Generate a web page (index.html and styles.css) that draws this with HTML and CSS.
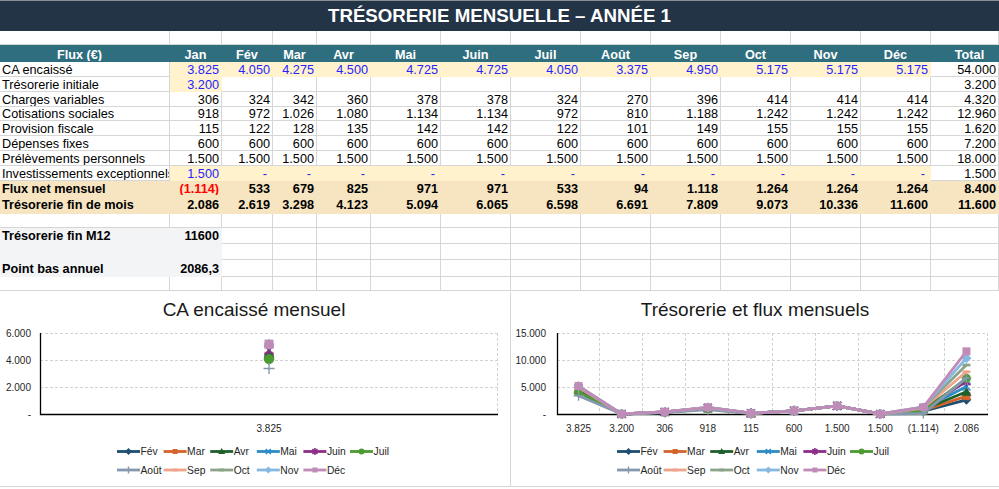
FILE: index.html
```html
<!DOCTYPE html>
<html lang="fr">
<head>
<meta charset="utf-8">
<title>Trésorerie mensuelle – Année 1</title>
<link rel="stylesheet" href="styles.css">
</head>
<body>
<div class="sheet">
  <header class="title-bar"><h1>TRÉSORERIE MENSUELLE – ANNÉE 1</h1></header>
  <table class="grid">
    <colgroup>
      <col class="w-label"><col class="w-jan"><col class="w-fev"><col class="w-mar"><col class="w-avr">
      <col class="w-m"><col class="w-m"><col class="w-m"><col class="w-m"><col class="w-m"><col class="w-m"><col class="w-m"><col class="w-m">
      <col class="w-total">
    </colgroup>
    <tbody>
      <tr class="h14"><td></td><td></td><td></td><td></td><td></td><td></td><td></td><td></td><td></td><td></td><td></td><td></td><td></td><td></td></tr>
      <tr class="head"><th class="lbl-h">Flux (€)</th><th>Jan</th><th>Fév</th><th>Mar</th><th>Avr</th><th>Mai</th><th>Juin</th><th>Juil</th><th>Août</th><th>Sep</th><th>Oct</th><th>Nov</th><th>Déc</th><th class="tot-h">Total</th></tr>
      <tr class="h15"><td class="lbl">CA encaissé</td><td class="y in">3.825</td><td class="y in">4.050</td><td class="y in">4.275</td><td class="y in">4.500</td><td class="y in">4.725</td><td class="y in">4.725</td><td class="y in">4.050</td><td class="y in">3.375</td><td class="y in">4.950</td><td class="y in">5.175</td><td class="y in">5.175</td><td class="y in">5.175</td><td>54.000</td></tr>
      <tr class="h15"><td class="lbl">Trésorerie initiale</td><td class="y in">3.200</td><td></td><td></td><td></td><td></td><td></td><td></td><td></td><td></td><td></td><td></td><td></td><td>3.200</td></tr>
      <tr class="h15"><td class="lbl">Charges variables</td><td>306</td><td>324</td><td>342</td><td>360</td><td>378</td><td>378</td><td>324</td><td>270</td><td>396</td><td>414</td><td>414</td><td>414</td><td>4.320</td></tr>
      <tr class="h14"><td class="lbl">Cotisations sociales</td><td>918</td><td>972</td><td>1.026</td><td>1.080</td><td>1.134</td><td>1.134</td><td>972</td><td>810</td><td>1.188</td><td>1.242</td><td>1.242</td><td>1.242</td><td>12.960</td></tr>
      <tr class="h15"><td class="lbl">Provision fiscale</td><td>115</td><td>122</td><td>128</td><td>135</td><td>142</td><td>142</td><td>122</td><td>101</td><td>149</td><td>155</td><td>155</td><td>155</td><td>1.620</td></tr>
      <tr class="h15"><td class="lbl">Dépenses fixes</td><td>600</td><td>600</td><td>600</td><td>600</td><td>600</td><td>600</td><td>600</td><td>600</td><td>600</td><td>600</td><td>600</td><td>600</td><td>7.200</td></tr>
      <tr class="h15"><td class="lbl">Prélèvements personnels</td><td>1.500</td><td>1.500</td><td>1.500</td><td>1.500</td><td>1.500</td><td>1.500</td><td>1.500</td><td>1.500</td><td>1.500</td><td>1.500</td><td>1.500</td><td>1.500</td><td>18.000</td></tr>
      <tr class="h15"><td class="lbl">Investissements exceptionnels</td><td class="y in">1.500</td><td class="y in dash">-</td><td class="y in dash">-</td><td class="y in dash">-</td><td class="y in dash">-</td><td class="y in dash">-</td><td class="y in dash">-</td><td class="y in dash">-</td><td class="y in dash">-</td><td class="y in dash">-</td><td class="y in dash">-</td><td class="y in dash">-</td><td>1.500</td></tr>
      <tr class="h15 tan"><td class="lbl">Flux net mensuel</td><td class="neg">(1.114)</td><td>533</td><td>679</td><td>825</td><td>971</td><td>971</td><td>533</td><td>94</td><td>1.118</td><td>1.264</td><td>1.264</td><td>1.264</td><td>8.400</td></tr>
      <tr class="h18 tan"><td class="lbl">Trésorerie fin de mois</td><td>2.086</td><td>2.619</td><td>3.298</td><td>4.123</td><td>5.094</td><td>6.065</td><td>6.598</td><td>6.691</td><td>7.809</td><td>9.073</td><td>10.336</td><td>11.600</td><td>11.600</td></tr>
      <tr class="h14"><td></td><td></td><td></td><td></td><td></td><td></td><td></td><td></td><td></td><td></td><td></td><td></td><td></td><td></td></tr>
      <tr class="h16"><td class="lbl g b">Trésorerie fin M12</td><td class="g b">11600</td><td></td><td></td><td></td><td></td><td></td><td></td><td></td><td></td><td></td><td></td><td></td><td></td></tr>
      <tr class="h16"><td class="g"></td><td class="g"></td><td></td><td></td><td></td><td></td><td></td><td></td><td></td><td></td><td></td><td></td><td></td><td></td></tr>
      <tr class="h17"><td class="lbl g b">Point bas annuel</td><td class="g b">2086,3</td><td></td><td></td><td></td><td></td><td></td><td></td><td></td><td></td><td></td><td></td><td></td><td></td></tr>
      <tr class="h14"><td></td><td></td><td></td><td></td><td></td><td></td><td></td><td></td><td></td><td></td><td></td><td></td><td></td><td></td></tr>
    </tbody>
  </table>
  <section class="charts">
    <figure class="chart chart-ca"><svg id="chart-ca" class="chart-svg" xmlns="http://www.w3.org/2000/svg"></svg></figure>
    <div class="chart-gap"></div>
    <figure class="chart chart-flux"><svg id="chart-flux" class="chart-svg" xmlns="http://www.w3.org/2000/svg"></svg></figure>
  </section>
</div>
<script src="script.js"></script>
</body>
</html>
```

FILE: styles.css
```css
html, body {
  margin: 0;
  padding: 0;
  background: #ffffff;
  overflow: hidden;
}

.sheet {
  width: 999px;
  font-family: "Liberation Sans", Arial, sans-serif;
}

.title-bar {
  box-sizing: border-box;
  height: 31px;
  background: #243447;
  border-top: 1px solid #8a8f96;
  display: flex;
  align-items: center;
  justify-content: center;
}

.title-bar h1 {
  margin: 0;
  color: #ffffff;
  font-size: 18.7px;
  font-weight: bold;
  line-height: 30px;
}

.grid {
  width: 999px;
  table-layout: fixed;
  border-collapse: separate;
  border-spacing: 0;
  font-size: 12.7px;
  color: #000000;
}

.w-label { width: 170px; }
.w-jan { width: 52px; }
.w-fev { width: 51px; }
.w-mar { width: 44px; }
.w-avr { width: 54px; }
.w-m { width: 70px; }
.w-total { width: 68px; }

.grid td,
.grid th {
  box-sizing: border-box;
  padding: 1px 2px 0;
  border-right: 1px solid #d6d6d6;
  border-bottom: 1px solid #d6d6d6;
  white-space: nowrap;
  overflow: hidden;
  text-align: right;
  line-height: 12px;
  vertical-align: middle;
}

.h14 { height: 14px; }
.h15 { height: 15px; }
.h16 { height: 16px; }
.h17 { height: 17px; }
.h18 { height: 18px; }

.head { height: 17px; }
.grid .head th {
  background: #2f6e7e;
  border-color: #2f6e7e;
  color: #ffffff;
  font-weight: bold;
  text-align: center;
  padding-top: 3px;
}
.grid .head .lbl-h { padding-right: 12px; }
.grid .head .tot-h { padding-left: 12px; }

.grid td.lbl { text-align: left; }

.grid td.y {
  background: #fff2cc;
  border-color: #fff2cc;
}

.in { color: #2424ff; }
.grid td.dash { padding-right: 5px; }

.tan td {
  background: #f6e5c0;
  border-color: #f6e5c0;
  font-weight: bold;
}

.neg { color: #ff0000; }

.grid td.g {
  background: #f3f4f6;
  border-color: #f3f4f6;
}
.b { font-weight: bold; }

.charts {
  display: flex;
  margin-top: 1px;
  height: 194px;
  border-bottom: 1px solid #d6d6d6;
}

.chart {
  margin: 0;
  background: #ffffff;
}
.chart-ca { width: 508px; }
.chart-flux { width: 487px; }

.chart-gap {
  width: 4px;
  background: linear-gradient(to right, transparent 2px, #d6d6d6 2px, #d6d6d6 3px, transparent 3px);
}

.chart-svg {
  display: block;
}

.c-title {
  font-family: "Liberation Sans", Arial, sans-serif;
  font-size: 19px;
  fill: #1a1a1a;
}

.c-axis {
  font-family: "Liberation Sans", Arial, sans-serif;
  font-size: 10px;
  fill: #262626;
}

.c-legend {
  font-family: "Liberation Sans", Arial, sans-serif;
  font-size: 10.3px;
  fill: #262626;
}
```

FILE: script.js
```js
(function () {
  var NS = 'http://www.w3.org/2000/svg';
  var MONTHS = ['Fév', 'Mar', 'Avr', 'Mai', 'Juin', 'Juil', 'Août', 'Sep', 'Oct', 'Nov', 'Déc'];
  var COLORS = ['#1d4f72', '#d2642c', '#1f5f2b', '#2a8bc6', '#8c2d88', '#4b9a32', '#8599ae', '#eea38c', '#8ba489', '#86b9e2', '#c18bb8'];
  var MARKERS = ['diamond', 'square', 'triangle', 'x', 'star', 'circle', 'plus', 'dash', 'dash', 'diamond', 'square'];

  var CA = [[4050], [4275], [4500], [4725], [4725], [4050], [3375], [4950], [5175], [5175], [5175]];
  var FLUX = [
    [4050, 0, 324, 972, 122, 600, 1500, 0, 533, 2619],
    [4275, 0, 342, 1026, 128, 600, 1500, 0, 679, 3298],
    [4500, 0, 360, 1080, 135, 600, 1500, 0, 825, 4123],
    [4725, 0, 378, 1134, 142, 600, 1500, 0, 971, 5094],
    [4725, 0, 378, 1134, 142, 600, 1500, 0, 971, 6065],
    [4050, 0, 324, 972, 122, 600, 1500, 0, 533, 6598],
    [3375, 0, 270, 810, 101, 600, 1500, 0, 94, 6691],
    [4950, 0, 396, 1188, 149, 600, 1500, 0, 1118, 7809],
    [5175, 0, 414, 1242, 155, 600, 1500, 0, 1264, 9073],
    [5175, 0, 414, 1242, 155, 600, 1500, 0, 1264, 10336],
    [5175, 0, 414, 1242, 155, 600, 1500, 0, 1264, 11600]
  ];

  function el(parent, tag, attrs, text) {
    var n = document.createElementNS(NS, tag);
    for (var k in attrs) n.setAttribute(k, attrs[k]);
    if (text != null) n.textContent = text;
    parent.appendChild(n);
    return n;
  }

  function marker(g, type, cx, cy, s, color) {
    var h = s / 2;
    switch (type) {
      case 'diamond':
        el(g, 'polygon', { points: [cx, cy - h - 1, cx + h + 1, cy, cx, cy + h + 1, cx - h - 1, cy].join(' '), fill: color });
        break;
      case 'square':
        el(g, 'rect', { x: cx - h, y: cy - h, width: s, height: s, fill: color });
        break;
      case 'triangle':
        el(g, 'polygon', { points: [cx, cy - h - 1, cx + h + 1, cy + h, cx - h - 1, cy + h].join(' '), fill: color });
        break;
      case 'x':
        el(g, 'path', { d: 'M' + (cx - h) + ' ' + (cy - h) + 'L' + (cx + h) + ' ' + (cy + h) + 'M' + (cx + h) + ' ' + (cy - h) + 'L' + (cx - h) + ' ' + (cy + h), stroke: color, 'stroke-width': 1.6, fill: 'none' });
        break;
      case 'star':
        el(g, 'path', { d: 'M' + (cx - h) + ' ' + (cy - h) + 'L' + (cx + h) + ' ' + (cy + h) + 'M' + (cx + h) + ' ' + (cy - h) + 'L' + (cx - h) + ' ' + (cy + h) + 'M' + cx + ' ' + (cy - h - 1) + 'V' + (cy + h + 1), stroke: color, 'stroke-width': 1.6, fill: 'none' });
        break;
      case 'circle':
        el(g, 'circle', { cx: cx, cy: cy, r: h + 0.5, fill: color });
        break;
      case 'plus':
        el(g, 'path', { d: 'M' + (cx - h - 1) + ' ' + cy + 'H' + (cx + h + 1) + 'M' + cx + ' ' + (cy - h - 1) + 'V' + (cy + h + 1), stroke: color, 'stroke-width': 1.4, fill: 'none' });
        break;
      default:
        el(g, 'path', { d: 'M' + (cx - h) + ' ' + cy + 'H' + (cx + h), stroke: color, 'stroke-width': 2.8, fill: 'none' });
    }
  }

  function buildChart(svg, cfg) {
    var W = cfg.width, H = 194;
    svg.setAttribute('viewBox', '0 0 ' + W + ' ' + H);
    svg.setAttribute('width', W);
    svg.setAttribute('height', H);

    el(svg, 'text', { x: cfg.titleX, y: 24, 'text-anchor': 'middle', 'class': 'c-title' }, cfg.title);

    var x0 = cfg.x0, x1 = cfg.x1, y0 = 41, y1 = 122;
    var n = cfg.cats.length, cw = (x1 - x0) / n;

    var grid = el(svg, 'g', { stroke: '#d2d2d2', 'stroke-width': 1, 'stroke-dasharray': '3 2', fill: 'none' });
    for (var t = 1; t <= 3; t++) {
      var gy = Math.round(y1 - (y1 - y0) * t / 3) + 0.5;
      el(grid, 'path', { d: 'M' + x0 + ' ' + gy + 'H' + x1 });
    }
    for (var k = 1; k <= n; k++) {
      var gx = Math.round(x0 + k * cw) - 0.5;
      el(grid, 'path', { d: 'M' + gx + ' ' + y0 + 'V' + y1 });
    }

    for (var t2 = 0; t2 <= 3; t2++) {
      var ly = y1 - (y1 - y0) * t2 / 3;
      el(svg, 'text', { x: cfg.labelX, y: ly + 3.8, 'text-anchor': 'end', 'class': 'c-axis' }, cfg.yLabels[t2]);
    }
    cfg.cats.forEach(function (c, i) {
      el(svg, 'text', { x: x0 + cw * (i + 0.5), y: 140, 'text-anchor': 'middle', 'class': 'c-axis' }, c);
    });

    el(svg, 'path', { d: 'M' + (x0 + 0.5) + ' ' + y0 + 'V' + (y1 + 0.5) + 'H' + x1, stroke: '#000000', 'stroke-width': 1.3, fill: 'none' });

    var ser = el(svg, 'g', {});
    cfg.series.forEach(function (vals, s) {
      var color = COLORS[s];
      var pts = vals.map(function (v, i) {
        return [x0 + cw * (i + 0.5), y1 - (v / cfg.max) * (y1 - y0)];
      });
      var g = el(ser, 'g', {});
      if (pts.length > 1) {
        el(g, 'polyline', {
          points: pts.map(function (p) { return p[0].toFixed(1) + ',' + p[1].toFixed(1); }).join(' '),
          fill: 'none', stroke: color, 'stroke-width': 2.8, 'stroke-linejoin': 'round', 'stroke-linecap': 'round'
        });
      }
      pts.forEach(function (p) { marker(g, MARKERS[s], p[0], p[1], cfg.ms, color); });
    });

    var lg = el(svg, 'g', {});
    MONTHS.forEach(function (m, i) {
      var row = i < 6 ? 0 : 1, col = i % 6;
      var x = cfg.legendX + col * 46.6, y = row ? 178 : 159.5;
      el(lg, 'path', { d: 'M' + x + ' ' + y + 'H' + (x + 23), stroke: COLORS[i], 'stroke-width': 2.8, fill: 'none' });
      marker(lg, MARKERS[i], x + 11.5, y, 5, COLORS[i]);
      el(lg, 'text', { x: x + 23.5, y: y + 3.6, 'class': 'c-legend' }, m);
    });
  }

  buildChart(document.getElementById('chart-ca'), {
    width: 508, title: 'CA encaissé mensuel', titleX: 254,
    x0: 40, x1: 498, labelX: 31, max: 6000,
    yLabels: ['-', '2.000', '4.000', '6.000'],
    cats: ['3.825'], series: CA, ms: 9, legendX: 117
  });

  buildChart(document.getElementById('chart-flux'), {
    width: 487, title: 'Trésorerie et flux mensuels', titleX: 243,
    x0: 45, x1: 476, labelX: 34, max: 15000,
    yLabels: ['-', '5.000', '10.000', '15.000'],
    cats: ['3.825', '3.200', '306', '918', '115', '600', '1.500', '1.500', '(1.114)', '2.086'],
    series: FLUX, ms: 8, legendX: 105
  });
})();
```
